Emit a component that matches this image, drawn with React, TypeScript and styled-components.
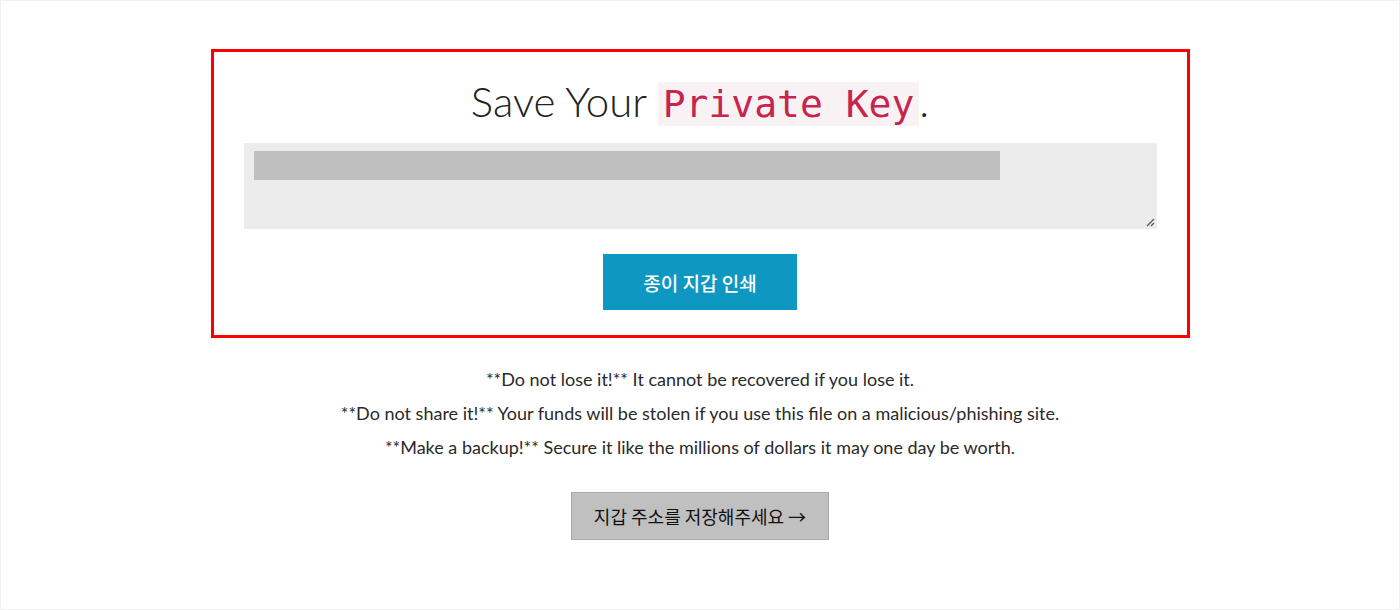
import React, { FC } from 'react';
import styled, { createGlobalStyle } from 'styled-components';

const GlobalStyle = createGlobalStyle`
  html, body {
    margin: 0;
    padding: 0;
    background: #fff;
  }
  * {
    box-sizing: border-box;
  }
`;

const Page = styled.div`
  height: 610px;
  border: 1px solid #f0f0f0;
  display: flex;
  flex-direction: column;
  align-items: center;
  padding-top: 48px;
  font-family: Lato, 'Noto Sans CJK KR', sans-serif;
  color: #333;
`;

const KeyPanel = styled.section`
  width: 979px;
  height: 289px;
  border: 3px solid #ff0000;
  display: flex;
  flex-direction: column;
  align-items: center;
  padding: 24px 30px 0;
`;

const Title = styled.h1`
  margin: 0;
  font-family: Lato, sans-serif;
  font-weight: 300;
  font-size: 42px;
  line-height: 50px;
  color: #222;
`;

const Code = styled.code`
  font-family: 'DejaVu Sans Mono', monospace;
  font-size: 38px;
  color: #c7254e;
  background: #f9f2f4;
  padding: 0 5px;
`;

const KeyArea = styled.div`
  position: relative;
  margin-top: 14px;
  width: 100%;
  height: 86px;
  background: #ececec;
  padding: 8px 10px;
`;

const Redacted = styled.div`
  width: 746px;
  height: 29px;
  background: #bfbfbf;
`;

const Grip = styled.svg`
  position: absolute;
  right: 2px;
  bottom: 2px;
`;

const Button = styled.button<{ $variant: 'primary' | 'muted' }>`
  font-family: 'Noto Sans CJK KR', Lato, sans-serif;
  border: 1px solid ${(p) => (p.$variant === 'primary' ? '#0e97c0' : '#a9a9a9')};
  background: ${(p) => (p.$variant === 'primary' ? '#0e97c0' : '#c0c0c0')};
  color: ${(p) => (p.$variant === 'primary' ? '#fff' : '#111')};
  font-size: ${(p) => (p.$variant === 'primary' ? '19px' : '18px')};
  font-weight: ${(p) => (p.$variant === 'primary' ? 500 : 400)};
  cursor: pointer;
`;

const PrintButton = styled(Button)`
  margin-top: 25px;
  width: 194px;
  height: 56px;
`;

const NextButton = styled(Button)`
  margin-top: 28px;
  width: 258px;
  height: 48px;
`;

const Notes = styled.div`
  margin-top: 24px;
  display: flex;
  flex-direction: column;
  align-items: center;
  font-size: 18px;
  line-height: 34px;
  color: #2a2a2a;
`;

const Note = styled.p`
  margin: 0;
`;

const notes = [
  '**Do not lose it!** It cannot be recovered if you lose it.',
  '**Do not share it!** Your funds will be stolen if you use this file on a malicious/phishing site.',
  '**Make a backup!** Secure it like the millions of dollars it may one day be worth.',
];

const App: FC = () => {
  return (
    <>
      <GlobalStyle />
      <Page>
        <KeyPanel>
          <Title>
            Save Your <Code>Private Key</Code>.
          </Title>
          <KeyArea>
            <Redacted />
            <Grip width="9" height="9" viewBox="0 0 9 9">
              <path d="M8 1 L1 8 M8 5 L5 8" stroke="#555" strokeWidth="1.2" />
            </Grip>
          </KeyArea>
          <PrintButton $variant="primary">종이 지갑 인쇄</PrintButton>
        </KeyPanel>
        <Notes>
          {notes.map((n) => (
            <Note key={n}>{n}</Note>
          ))}
        </Notes>
        <NextButton $variant="muted">지갑 주소를 저장해주세요 →</NextButton>
      </Page>
    </>
  );
};

export default App;
